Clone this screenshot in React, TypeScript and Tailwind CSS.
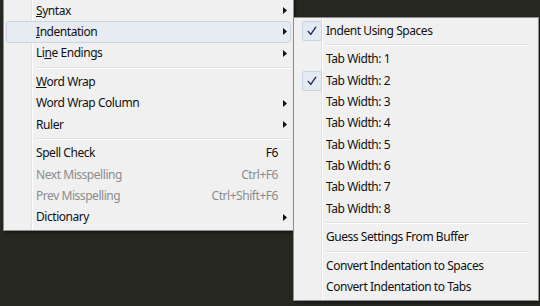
import React from "react";

type Item =
  | { sep: true }
  | {
      sep?: false;
      label: React.ReactNode;
      shortcut?: string;
      sub?: boolean;
      disabled?: boolean;
      hover?: boolean;
      checked?: boolean;
    };

const u = (s: string) => <span className="underline underline-offset-[1px]">{s}</span>;

const mainItems: Item[] = [
  { label: <>{u("S")}yntax</>, sub: true },
  { label: <>{u("I")}ndentation</>, sub: true, hover: true },
  { label: <>Li{u("n")}e Endings</>, sub: true },
  { sep: true },
  { label: <>{u("W")}ord Wrap</> },
  { label: "Word Wrap Column", sub: true },
  { label: "Ruler", sub: true },
  { sep: true },
  { label: "Spell Check", shortcut: "F6" },
  { label: "Next Misspelling", shortcut: "Ctrl+F6", disabled: true },
  { label: "Prev Misspelling", shortcut: "Ctrl+Shift+F6", disabled: true },
  { label: "Dictionary", sub: true },
];

const subItems: Item[] = [
  { label: "Indent Using Spaces", checked: true },
  { sep: true },
  { label: "Tab Width: 1" },
  { label: "Tab Width: 2", checked: true },
  { label: "Tab Width: 3" },
  { label: "Tab Width: 4" },
  { label: "Tab Width: 5" },
  { label: "Tab Width: 6" },
  { label: "Tab Width: 7" },
  { label: "Tab Width: 8" },
  { sep: true },
  { label: "Guess Settings From Buffer" },
  { sep: true },
  { label: "Convert Indentation to Spaces" },
  { label: "Convert Indentation to Tabs" },
];

function Arrow() {
  return (
    <svg width="4" height="7" viewBox="0 0 4 7" className="shrink-0">
      <path d="M0 0 L4 3.5 L0 7 Z" fill="#111" />
    </svg>
  );
}

function Check() {
  return (
    <div className="w-[20px] h-[20px] rounded-[2px] border border-[#c7d3df] bg-[#e4eaf1] flex items-center justify-center">
      <svg width="10" height="10" viewBox="0 0 10 10">
        <path d="M1.2 5.4 L3.8 8.4 L8.8 1.2" fill="none" stroke="#1e2b63" strokeWidth="1.4" strokeLinecap="round" strokeLinejoin="round" />
      </svg>
    </div>
  );
}

function Menu({ items, sepEnd }: { items: Item[]; sepEnd: string }) {
  return (
    <div className="relative bg-[#f0f0f0] border border-[#8e8e8e] py-[2px] shadow-[2px_2px_3px_rgba(0,0,0,0.45)]">
      <div className="absolute top-0 bottom-0 left-[27px] border-l border-[#e2e3e3] border-r-white border-r w-[2px]" />
      {items.map((it, i) =>
        it.sep ? (
          <div key={i} className={`h-[7.5px] flex flex-col justify-center ml-[32px] ${sepEnd}`}>
            <div className="h-px bg-[#dedede]" />
            <div className="h-px bg-white" />
          </div>
        ) : (
          <div
            key={i}
            className={`relative h-[21.3px] flex items-center mx-[2px] rounded-[3px] border ${
              it.hover ? "border-[#c9d5e2] bg-[#e7ecf2]" : "border-transparent"
            }`}
          >
            <div className="shrink-0 w-[29px] flex items-center justify-center">
              {it.checked && <Check />}
            </div>
            <span className={`flex-1 whitespace-nowrap ${it.disabled ? "text-[#8c8c8c]" : "text-[#111]"}`}>
              {it.label}
            </span>
            {it.shortcut && (
              <span className={`whitespace-nowrap mr-[12px] ${it.disabled ? "text-[#8c8c8c]" : "text-[#111]"}`}>
                {it.shortcut}
              </span>
            )}
            {it.sub && (
              <span className="mr-[3px]">
                <Arrow />
              </span>
            )}
          </div>
        )
      )}
    </div>
  );
}

export default function App() {
  return (
    <div
      className="relative w-[540px] h-[306px] overflow-hidden bg-[#272722] text-[12px] leading-none tracking-[-0.45px]"
      style={{ fontFamily: '"Noto Sans", "Open Sans", sans-serif' }}
    >
      <div className="ml-[3px] mt-[-3px] w-[291px]">
        <Menu items={mainItems} sepEnd="mr-[2px]" />
      </div>
      <div className="absolute left-[293px] top-[17px] w-[246px]">
        <Menu items={subItems} sepEnd="mr-[10px]" />
      </div>
    </div>
  );
}
